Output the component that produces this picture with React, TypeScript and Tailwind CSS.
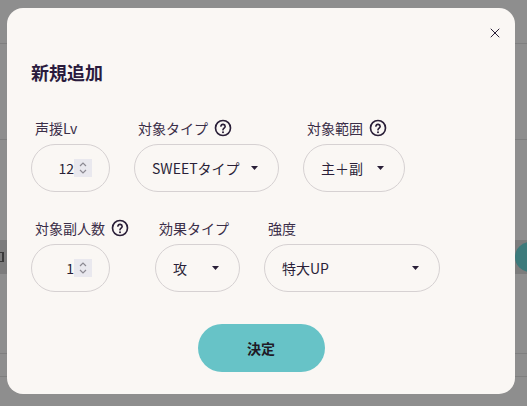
import { X } from "lucide-react";

const font = { fontFamily: '"Noto Sans CJK JP", "Noto Sans", sans-serif' };

const HelpIcon = () => (
  <svg width="18" height="18" viewBox="0 0 24 24" className="text-[#2a1f38]">
    <circle cx="12" cy="12" r="10" fill="none" stroke="currentColor" strokeWidth="2.2" />
    <path
      d="M9.2 9.4a2.9 2.9 0 0 1 5.7.6c0 1.9-2.9 2.4-2.9 4.4"
      fill="none"
      stroke="currentColor"
      strokeWidth="2.2"
      strokeLinecap="round"
    />
    <circle cx="12" cy="17.6" r="1.3" fill="currentColor" />
  </svg>
);

const Caret = () => (
  <svg width="7" height="4" viewBox="0 0 7 4">
    <polygon points="0,0 7,0 3.5,4" fill="#2a1f38" />
  </svg>
);

const Label = ({ text, help }: { text: string; help?: boolean }) => (
  <div className="flex items-center gap-[6px] pl-1 h-5 mb-[6px] text-[14px] text-[#3a2e48]">
    <span>{text}</span>
    {help && <HelpIcon />}
  </div>
);

const NumberBox = ({ value }: { value: string }) => (
  <div className="w-[79px] h-[48px] rounded-full border border-[#d6d1d2] flex items-center justify-end pr-[17px] text-[14px] text-[#2a1f38]">
    <span>{value}</span>
    <div className="w-[18px] h-[18px] bg-[#e9e8ee] flex flex-col items-center justify-center">
      <svg width="10" height="14" viewBox="0 0 10 14">
        <path d="M2 5l3-3 3 3" fill="none" stroke="#8c8a92" strokeWidth="1.2" />
        <path d="M2 9l3 3 3-3" fill="none" stroke="#8c8a92" strokeWidth="1.2" />
      </svg>
    </div>
  </div>
);

const SelectBox = ({ value, width }: { value: string; width: string }) => (
  <div
    className={`${width} h-[48px] rounded-full border border-[#d6d1d2] flex items-center justify-between pl-[17px] pr-[20px] text-[14px] text-[#2a1f38]`}
  >
    <span>{value}</span>
    <Caret />
  </div>
);

const Field = ({ label, help, children }: { label: string; help?: boolean; children: React.ReactNode }) => (
  <div className="flex flex-col">
    <Label text={label} help={help} />
    {children}
  </div>
);

export default function App() {
  return (
    <div className="relative w-[527px] h-[406px] overflow-hidden bg-[#8e8e8e]" style={font}>
      {/* page behind the overlay */}
      <div className="flex flex-col">
        <div className="h-[44px] border-b border-[#7f7f7f]" />
        <div className="h-[96px] border-b border-[#7f7f7f]" />
        <div className="h-[100px]" />
        <div className="h-[34px] bg-[#7c7c7c] flex items-center justify-between">
          <div className="w-[4px] h-[10px] border-r-2 border-y border-[#3a3a3a]" />
          <div className="w-[30px] h-[30px] rounded-full bg-[#3c7a7b] -mr-[18px]" />
        </div>
        <div className="h-[80px] border-b border-[#7f7f7f]" />
        <div className="h-[23px] border-b border-[#7f7f7f]" />
      </div>

      {/* modal */}
      <div className="absolute inset-0 pt-[8px] pl-[7px]">
        <div className="relative w-[508px] h-[386px] rounded-[16px] bg-[#faf7f4] px-6 pt-[51px]">
          <button className="absolute top-[17px] right-[12px] text-[#2a1f38]">
            <X size={16} strokeWidth={1.5} />
          </button>
          <h2 className="text-[18px] leading-[27px] font-bold text-[#2a1b3d]">新規追加</h2>

          <div className="flex gap-6 mt-[32px]">
            <Field label="声援Lv">
              <NumberBox value="12" />
            </Field>
            <Field label="対象タイプ" help>
              <SelectBox value="SWEETタイプ" width="w-[145px]" />
            </Field>
            <Field label="対象範囲" help>
              <SelectBox value="主＋副" width="w-[102px]" />
            </Field>
          </div>

          <div className="flex gap-6 mt-[26px]">
            <Field label="対象副人数" help>
              <div className="w-[100px]">
                <NumberBox value="1" />
              </div>
            </Field>
            <Field label="効果タイプ">
              <SelectBox value="攻" width="w-[85px]" />
            </Field>
            <Field label="強度">
              <SelectBox value="特大UP" width="w-[176px]" />
            </Field>
          </div>

          <div className="flex justify-center mt-[32px]">
            <button className="w-[127px] h-[48px] rounded-full bg-[#67c3c7] text-[14px] font-bold text-[#1f1a26]">
              決定
            </button>
          </div>
        </div>
      </div>
    </div>
  );
}
